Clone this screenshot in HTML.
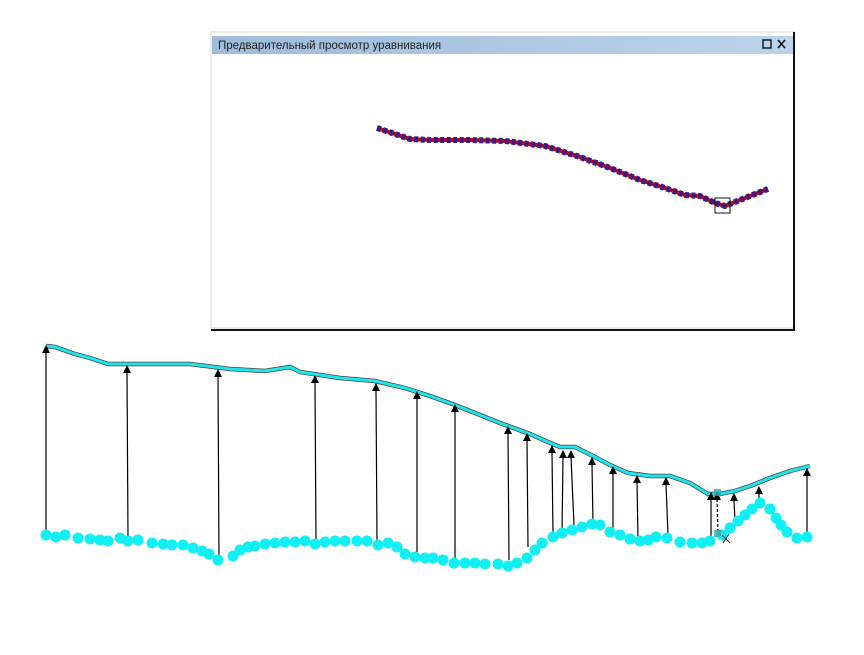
<!DOCTYPE html>
<html><head><meta charset="utf-8"><style>
html,body{margin:0;padding:0;background:#fff;width:864px;height:655px;overflow:hidden}
svg{position:absolute;left:0;top:0}
.t{font-family:"Liberation Sans",sans-serif;font-size:11.5px;fill:#222}
</style></head><body>
<svg width="864" height="655" viewBox="0 0 864 655" xmlns="http://www.w3.org/2000/svg">
<defs>
<linearGradient id="g" x1="0" x2="1"><stop offset="0" stop-color="#9fbcdc"/><stop offset="1" stop-color="#bcd3ea"/></linearGradient>
</defs>
<rect x="211" y="32" width="583" height="298" fill="#fff" stroke="#d8d8d8"/>
<line x1="794" y1="32" x2="794" y2="331" stroke="#111" stroke-width="2"/>
<line x1="211" y1="330" x2="795" y2="330" stroke="#111" stroke-width="2"/>
<line x1="212" y1="328" x2="793" y2="328" stroke="#ccc"/>
<rect x="212" y="36" width="581" height="18" fill="url(#g)"/>
<text class="t" x="218" y="49">Предварительный просмотр уравнивания</text>
<rect x="763" y="40" width="8" height="8" fill="none" stroke="#111" stroke-width="1.4"/>
<path d="M778 40l7 8M785 40l-7 8" stroke="#111" stroke-width="1.6"/>
<polyline fill="none" stroke="#c00" stroke-width="4" points="377,128 395,134 410,139 430,140 470,140 505,141 545,146 580,157 610,168 640,180 665,188 685,195 700,196 715,203 725,206 740,200 755,194 768,189"/>
<polyline fill="none" stroke="#3a1a8a" stroke-width="6" stroke-dasharray="4 2.5" points="377,128 395,134 410,139 430,140 470,140 505,141 545,146 580,157 610,168 640,180 665,188 685,195 700,196 715,203 725,206 740,200 755,194 768,189"/>
<rect x="715" y="198" width="15" height="15" fill="none" stroke="#111"/>
<g stroke="#000" stroke-width="1.2">
<line x1="46" y1="352" x2="46" y2="535"/><line x1="127" y1="372" x2="128" y2="538"/><line x1="218" y1="376" x2="219" y2="560"/><line x1="315" y1="382" x2="316" y2="543"/><line x1="376" y1="390" x2="377" y2="544"/><line x1="417" y1="398" x2="417" y2="556"/><line x1="455" y1="411" x2="455" y2="558"/><line x1="508" y1="433" x2="509" y2="560"/><line x1="527" y1="440" x2="528" y2="547"/><line x1="552" y1="452" x2="553" y2="535"/><line x1="563" y1="457" x2="562" y2="533"/><line x1="571" y1="457" x2="574" y2="525"/><line x1="592" y1="464" x2="593" y2="524"/><line x1="613" y1="473" x2="613" y2="533"/><line x1="637" y1="482" x2="638" y2="538"/><line x1="666" y1="484" x2="668" y2="535"/><line x1="711" y1="499" x2="711" y2="537"/><line x1="734" y1="500" x2="735" y2="521"/><line x1="759" y1="493" x2="759" y2="503"/><line x1="807" y1="475" x2="807" y2="537"/>
<line x1="717" y1="499" x2="718" y2="534" stroke-dasharray="3 2"/>
</g>
<polyline fill="none" stroke="#444" stroke-width="4.5" points="46,346 55,347 75,354 90,358 108,364 190,364 230,369 265,371 290,367 300,372 340,378 375,381 405,388 430,396 455,405 480,415 500,423 530,434 548,442 560,447 575,447 595,457 610,465 628,473 650,476 670,476 690,483 708,494 720,494 735,491 750,486 770,478 790,471 810,466"/>
<polyline fill="none" stroke="#22e4ec" stroke-width="3" points="46,346 55,347 75,354 90,358 108,364 190,364 230,369 265,371 290,367 300,372 340,378 375,381 405,388 430,396 455,405 480,415 500,423 530,434 548,442 560,447 575,447 595,457 610,465 628,473 650,476 670,476 690,483 708,494 720,494 735,491 750,486 770,478 790,471 810,466"/>
<g fill="#000">
<path d="M46 345l-4 8h8z"/><path d="M127 365l-4 8h8z"/><path d="M218 369l-4 8h8z"/><path d="M315 375l-4 8h8z"/><path d="M376 383l-4 8h8z"/><path d="M417 391l-4 8h8z"/><path d="M455 404l-4 8h8z"/><path d="M508 426l-4 8h8z"/><path d="M527 433l-4 8h8z"/><path d="M552 445l-4 8h8z"/><path d="M563 450l-4 8h8z"/><path d="M571 450l-4 8h8z"/><path d="M592 457l-4 8h8z"/><path d="M613 466l-4 8h8z"/><path d="M637 475l-4 8h8z"/><path d="M666 477l-4 8h8z"/><path d="M711 492l-4 8h8z"/><path d="M717 492l-4 8h8z"/><path d="M734 493l-4 8h8z"/><path d="M759 486l-4 8h8z"/><path d="M807 468l-4 8h8z"/>
</g>
<g fill="#10f0f4">
<circle cx="46" cy="535" r="5.5"/><circle cx="56" cy="537" r="5.5"/><circle cx="65" cy="535" r="5.5"/><circle cx="78" cy="538" r="5.5"/><circle cx="90" cy="539" r="5.5"/><circle cx="100" cy="540" r="5.5"/><circle cx="108" cy="541" r="5.5"/><circle cx="120" cy="538" r="5.5"/><circle cx="128" cy="541" r="5.5"/><circle cx="138" cy="540" r="5.5"/><circle cx="152" cy="543" r="5.5"/><circle cx="163" cy="544" r="5.5"/><circle cx="172" cy="545" r="5.5"/><circle cx="183" cy="545" r="5.5"/><circle cx="193" cy="548" r="5.5"/><circle cx="202" cy="551" r="5.5"/><circle cx="209" cy="554" r="5.5"/><circle cx="218" cy="560" r="5.5"/><circle cx="233" cy="556" r="5.5"/><circle cx="240" cy="550" r="5.5"/><circle cx="248" cy="547" r="5.5"/><circle cx="255" cy="546" r="5.5"/><circle cx="265" cy="544" r="5.5"/><circle cx="275" cy="543" r="5.5"/><circle cx="285" cy="542" r="5.5"/><circle cx="295" cy="542" r="5.5"/><circle cx="305" cy="541" r="5.5"/><circle cx="315" cy="544" r="5.5"/><circle cx="325" cy="542" r="5.5"/><circle cx="335" cy="541" r="5.5"/><circle cx="345" cy="541" r="5.5"/><circle cx="357" cy="541" r="5.5"/><circle cx="367" cy="541" r="5.5"/><circle cx="378" cy="545" r="5.5"/><circle cx="388" cy="543" r="5.5"/><circle cx="397" cy="547" r="5.5"/><circle cx="405" cy="554" r="5.5"/><circle cx="415" cy="557" r="5.5"/><circle cx="425" cy="558" r="5.5"/><circle cx="433" cy="558" r="5.5"/><circle cx="443" cy="560" r="5.5"/><circle cx="454" cy="563" r="5.5"/><circle cx="465" cy="563" r="5.5"/><circle cx="475" cy="563" r="5.5"/><circle cx="485" cy="564" r="5.5"/><circle cx="498" cy="564" r="5.5"/><circle cx="508" cy="566" r="5.5"/><circle cx="517" cy="563" r="5.5"/><circle cx="527" cy="558" r="5.5"/><circle cx="535" cy="550" r="5.5"/><circle cx="542" cy="543" r="5.5"/><circle cx="553" cy="537" r="5.5"/><circle cx="562" cy="533" r="5.5"/><circle cx="572" cy="530" r="5.5"/><circle cx="582" cy="527" r="5.5"/><circle cx="592" cy="524" r="5.5"/><circle cx="600" cy="525" r="5.5"/><circle cx="610" cy="532" r="5.5"/><circle cx="620" cy="535" r="5.5"/><circle cx="630" cy="539" r="5.5"/><circle cx="640" cy="541" r="5.5"/><circle cx="648" cy="540" r="5.5"/><circle cx="656" cy="537" r="5.5"/><circle cx="667" cy="538" r="5.5"/><circle cx="680" cy="542" r="5.5"/><circle cx="692" cy="543" r="5.5"/><circle cx="702" cy="543" r="5.5"/><circle cx="710" cy="541" r="5.5"/><circle cx="722" cy="535" r="5.5"/><circle cx="730" cy="528" r="5.5"/><circle cx="738" cy="521" r="5.5"/><circle cx="745" cy="515" r="5.5"/><circle cx="752" cy="509" r="5.5"/><circle cx="760" cy="503" r="5.5"/><circle cx="770" cy="509" r="5.5"/><circle cx="776" cy="518" r="5.5"/><circle cx="781" cy="525" r="5.5"/><circle cx="787" cy="532" r="5.5"/><circle cx="797" cy="538" r="5.5"/><circle cx="807" cy="537" r="5.5"/>
</g>
<rect x="714" y="530" width="7" height="7" fill="#3aa" opacity=".8"/>
<rect x="714" y="489" width="7" height="7" fill="#3aa" opacity=".8"/>
<path d="M722 535l8 8M729 534l-6 9" stroke="#224" stroke-width="1"/>
</svg>
</body></html>
